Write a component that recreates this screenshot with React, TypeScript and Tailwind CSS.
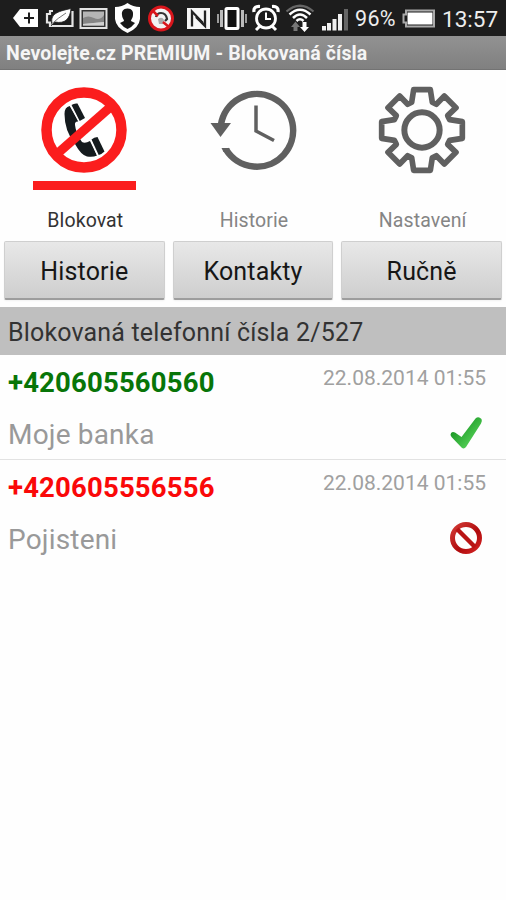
import type { ReactNode } from 'react'
import clsx from 'clsx'

function StatusBar() {
  return (
    <div className="flex h-9 items-center bg-[#1d1d1d] pl-3 text-[#ededed]">
      <svg width="27" height="36" viewBox="12 0 27 36" className="shrink-0">
        <path d="M13 18 L20 9 H38 V27 H20 Z" fill="#fff" />
        <path d="M29 12.5 V23.5 M24 18 H34" stroke="#1d1d1d" strokeWidth="2" />
      </svg>
      <svg width="30" height="36" viewBox="45 0 30 36" className="ml-1.5 shrink-0">
        <path d="M53 11 H50 V14 H47 V22.5 H50 V26 H72.5 V11" fill="none" stroke="#e4e4e4" strokeWidth="2.200" />
        <path d="M52 23 C50 13 60 11 71 8.500 C70 19 65 24 55 22 L51 26" fill="#fff" stroke="#1d1d1d" strokeWidth="0.8" />
        <path d="M51 24.500 Q58 18 66 13" fill="none" stroke="#777" strokeWidth="1" />
      </svg>
      <svg width="30" height="36" viewBox="78 0 30 36" className="ml-[3px] shrink-0">
        <rect x="80.5" y="9" width="26" height="19" fill="#333" stroke="#e2e2e2" strokeWidth="2" />
        <rect x="83" y="11.5" width="21" height="14" fill="#b5b5b5" />
        <path d="M83 18 Q88 15 94 18 T104 15 V22 L83 24 Z" fill="#858585" />
        <path d="M83 24 L104 22 V25.5 H83 Z" fill="#d0d0d0" />
      </svg>
      <svg width="28" height="36" viewBox="113 0 28 36" className="ml-[5px] shrink-0">
        <path d="M127.500 3 Q133 7 140 7 V19 Q139 28 127.500 33 Q116 28 115 19 V7 Q122 7 127.500 3 Z" fill="#fff" />
        <path d="M127.500 8.500 C132 8.500 133.500 11.500 133 15 C133 18 131 19 131 21 L135 23 Q132 27 127.500 29 Q123 27 120 23 L124 21 C124 19 122 18 122 15 C121.500 11.500 123 8.500 127.500 8.500 Z" fill="#181818" />
      </svg>
      <svg width="28" height="36" viewBox="147 0 28 36" className="ml-1.5 shrink-0">
        <circle cx="161" cy="18.500" r="11.500" fill="#f2f2f2" stroke="#d9161c" strokeWidth="3" />
        <path d="M156 17 Q157 13 161 13 Q166 13 167 19 L165 21" fill="none" stroke="#333" strokeWidth="2.200" />
        <path d="M158 19 Q162 16 164 20 L163 24 H159 Z" fill="#aaa" />
        <path d="M153 11 L158 16 M163 22 L169 27" stroke="#d9161c" strokeWidth="2.500" />
      </svg>
      <svg width="25" height="36" viewBox="186 0 25 36" className="ml-[11px] shrink-0">
        <rect x="187" y="8" width="23" height="21" fill="#f6f6f6" />
        <path d="M192 26.500 V11.500 L203 23" fill="none" stroke="#222" strokeWidth="2.300" />
        <path d="M196 17 L205 26 V10.500" fill="none" stroke="#222" strokeWidth="2.300" />
      </svg>
      <svg width="32" height="36" viewBox="216 0 32 36" className="ml-[5px] shrink-0">
        <rect x="226" y="8.500" width="12" height="20" rx="1" fill="#111" stroke="#fff" strokeWidth="3" />
        <path d="M221.500 10 V27 M242.500 10 V27" stroke="#bbb" strokeWidth="3" />
        <path d="M218 14 V23 M246 14 V23" stroke="#aaa" strokeWidth="1.800" />
      </svg>
      <svg width="28" height="36" viewBox="252 0 28 36" className="ml-1 shrink-0">
        <circle cx="266" cy="18.500" r="9.500" fill="none" stroke="#fff" strokeWidth="2.800" />
        <path d="M266 12.500 V19 H271" fill="none" stroke="#fff" strokeWidth="2" />
        <path d="M254 12 Q253 6 260 6.500 M278 12 Q279 6 272 6.500" fill="none" stroke="#fff" strokeWidth="3.200" />
        <path d="M260 26 L256 30 M272 26 L276 30" stroke="#fff" strokeWidth="3" />
      </svg>
      <svg width="30" height="36" viewBox="285 0 30 36" className="ml-[5px] shrink-0" fill="none">
        <path d="M286.500 11.500 Q300 0 313.500 11.500" stroke="#666" strokeWidth="2.200" />
        <path d="M289.500 14.500 Q300 5 310.500 14.500" stroke="#fff" strokeWidth="2.500" />
        <path d="M293 18 Q300 11 307 18" stroke="#fff" strokeWidth="2.500" />
        <path d="M296.500 21 Q300 17.500 303.500 21" stroke="#fff" strokeWidth="2.500" />
        <path d="M291 27 L295.500 21.500 L300 27 H297.500 V31 H293.500 V27 Z" fill="#777" />
        <path d="M302.500 22 H306.500 V27 H309 L304.500 32 L300 27 H302.500 Z" fill="#fff" />
      </svg>
      <svg width="28" height="36" viewBox="321 0 28 36" className="ml-1.5 shrink-0">
        <path d="M324 30.500 V26 M329 30.500 V23 M334.500 30.500 V19 M340 30.500 V14" stroke="#f0f0f0" strokeWidth="4" />
        <path d="M346 30.500 V9" stroke="#666" strokeWidth="4" />
      </svg>
      <span className="ml-1.5 w-[47px] whitespace-nowrap pt-0.5 text-[21.5px] leading-[34px] tracking-[0.3px]">96%</span>
      <svg width="34" height="36" viewBox="402 0 34 36" className="shrink-0">
        <path d="M406 10.500 H434 V26.500 H406 V22.500 H403.500 V14.500 H406 Z" fill="none" stroke="#aaa" strokeWidth="2" />
        <rect x="407.500" y="12.500" width="25" height="12" fill="#fff" />
      </svg>
      <span className="ml-[6px] whitespace-nowrap pt-0.5 text-[22.500px] leading-[34px]">13:57</span>
    </div>
  )
}

function BlockIcon() {
  return (
    <svg width="88" height="88" viewBox="0 0 88 88">
      <circle cx="44" cy="44" r="37.500" fill="#fff" stroke="#fb1d1d" strokeWidth="10.500" />
      <g fill="#151b1e">
        <path d="M29.700 20 Q24.500 21 24.500 28 Q24.500 45 35 58 Q41 69 47 70.500 Q53 71.500 57 69.500 L50 55 Q45 58 42 56 Q36 48 35 39 Q34.500 35 38.500 35.500 Z" />
        <path d="M31.500 19 Q34 17 37.500 17.500 L45 32 L39.700 35 Z" />
        <path d="M51.500 53.500 Q54 51 57.500 51 L64.500 65.500 Q62 68 58.700 69 Z" />
      </g>
      <path d="M30.500 19 L39 36 M50.500 53.500 L58 70.500" stroke="#fff" strokeWidth="1" />
      <path d="M17.500 67.500 L71 20.500" stroke="#fb1d1d" strokeWidth="9" />
    </svg>
  )
}

function HistoryIcon() {
  return (
    <svg width="88" height="88" viewBox="0 0 88 88" fill="none" stroke="#606060">
      <path d="M12 38.500 A36.300 36.300 0 1 1 17 63.500" strokeWidth="6.500" />
      <path d="M12.500 62 H20.500 L19.500 66 H14.500 Z" fill="#606060" stroke="none" />
      <path d="M1.500 37 H22 L11.500 51 Z" fill="#606060" stroke="none" />
      <path d="M47 19.500 V45 L65 54.500" strokeWidth="3.500" />
    </svg>
  )
}

function SettingsIcon() {
  return (
    <svg width="88" height="88" viewBox="-132 -132 264 264" fill="none" stroke="#606060" strokeWidth="17" strokeLinejoin="round">
      <path d="M-25 -121 H25 L31 -83 L43 -77 L67 -102 L102 -67 L77 -43 L83 -31 L121 -25 V25 L83 31 L77 43 L102 67 L67 102 L43 77 L31 83 L25 121 H-25 L-31 83 L-43 77 L-67 102 L-102 67 L-77 43 L-83 31 L-121 25 V-25 L-83 -31 L-77 -43 L-102 -67 L-67 -102 L-43 -77 L-31 -83 Z" />
      <circle r="53" strokeWidth="18" />
    </svg>
  )
}

function CheckIcon() {
  return (
    <svg width="34" height="34" viewBox="0 0 34 34">
      <defs>
        <linearGradient id="check" x1="0" y1="0" x2="1" y2="1">
          <stop offset="0.200" stopColor="#179322" />
          <stop offset="0.700" stopColor="#4cc84f" />
        </linearGradient>
      </defs>
      <path d="M1.500 19 Q2 15 6 16.500 L12.500 21 L26.500 2.500 Q29.500 0 32.500 3 Q33.500 5 32 7.500 L17 31 Q15 33.500 12.500 31.500 L2.500 21 Z" fill="url(#check)" />
    </svg>
  )
}

function BanIcon() {
  return (
    <svg width="34" height="34" viewBox="0 0 34 34" fill="none">
      <defs>
        <linearGradient id="ban" x1="0" y1="0" x2="1" y2="1">
          <stop offset="0" stopColor="#d23a35" />
          <stop offset="0.600" stopColor="#b00b0d" />
          <stop offset="1" stopColor="#d42424" />
        </linearGradient>
      </defs>
      <circle cx="17" cy="17" r="13.500" stroke="url(#ban)" strokeWidth="5" />
      <path d="M8 8 L26 26" stroke="#b91414" strokeWidth="4.500" />
    </svg>
  )
}

const tabs: { label: string; icon: ReactNode; active?: boolean }[] = [
  { label: 'Blokovat', icon: <BlockIcon />, active: true },
  { label: 'Historie', icon: <HistoryIcon /> },
  { label: 'Nastavení', icon: <SettingsIcon /> },
]

const actions = ['Historie', 'Kontakty', 'Ručně']

const numbers = [
  { number: '+420605560560', name: 'Moje banka', date: '22.08.2014 01:55', allowed: true },
  { number: '+420605556556', name: 'Pojisteni', date: '22.08.2014 01:55', allowed: false },
]

export default function App() {
  return (
    <div className="h-[900px] w-[506px] overflow-hidden bg-[#fefefe] font-['Roboto',sans-serif]">
      <StatusBar />
      <h1 className="h-[34px] border-b border-[#737373] bg-linear-to-b from-[#929292] to-[#808080] pl-1.5 text-[19.5px] leading-[35px] font-bold tracking-[0.12px] whitespace-nowrap text-[#f5f5f5]">
        Nevolejte.cz PREMIUM - Blokovaná čísla
      </h1>

      <nav className="grid h-[167px] grid-cols-3 pt-4">
        {tabs.map((tab) => (
          <button key={tab.label} className="flex flex-col items-center">
            {tab.icon}
            <span className={clsx('mt-[7px] h-[9px] w-[103px]', tab.active && 'bg-[#fb1d1d]')} />
            <span
              className={clsx(
                'mt-[17px] pl-0.5 text-[19.5px] leading-7 tracking-[0.1px]',
                tab.active ? 'text-[#333]' : 'text-[#858585]'
              )}
            >
              {tab.label}
            </span>
          </button>
        ))}
      </nav>

      <div className="grid h-[70px] grid-cols-3 gap-2 px-1 pt-1">
        {actions.map((label) => (
          <button
            key={label}
            className="h-[59px] rounded-xs border border-b-2 border-[#cfcfcf] border-b-[#9d9d9d] bg-linear-to-b from-[#e8e8e8] to-[#cecece] pt-[3px] text-[25px] tracking-[0.15px] text-[#161616] shadow-xs"
          >
            {label}
          </button>
        ))}
      </div>

      <h2 className="h-12 bg-[#bfbfbf] pl-2 text-[25px] leading-[51px] tracking-[0.17px] whitespace-nowrap text-[#333]">
        Blokovaná telefonní čísla 2/527
      </h2>

      <ul>
        {numbers.map((item) => (
          <li key={item.number} className="flex h-[105px] justify-between border-b border-[#e2e2e2] pr-5 pl-2 last:border-b-0">
            <div className="pt-2">
              <p
                className={clsx(
                  'text-[27.5px] leading-10 font-bold tracking-[0.18px]',
                  item.allowed ? 'text-[#087508]' : 'text-[#fa0808]'
                )}
              >
                {item.number}
              </p>
              <p className="mt-3 text-[28px] leading-10 tracking-[0.18px] text-[#999]">{item.name}</p>
            </div>
            <div className="flex flex-col items-end pt-2">
              <p className="text-[21px] leading-[30px] text-[#a0a0a0]">{item.date}</p>
              <div className="mt-[23px] mr-[3px]">{item.allowed ? <CheckIcon /> : <BanIcon />}</div>
            </div>
          </li>
        ))}
      </ul>
    </div>
  )
}
